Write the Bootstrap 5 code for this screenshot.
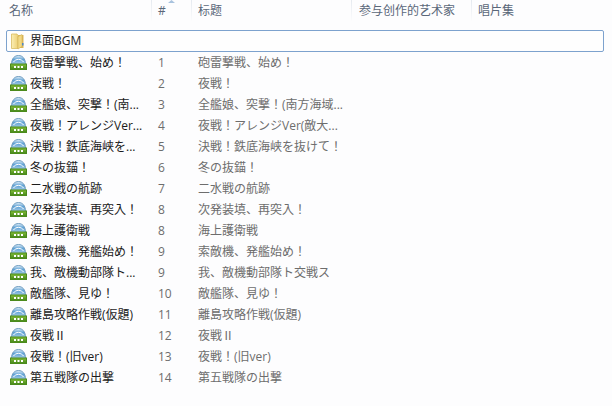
<!DOCTYPE html>
<html lang="ja">
<head>
<meta charset="utf-8">
<link href="https://cdn.jsdelivr.net/npm/bootstrap@5.3.0/dist/css/bootstrap.min.css" rel="stylesheet">
<style>
html,body{margin:0;background:#fdfdfe;overflow:hidden}
body{width:612px;height:406px;font:12px/16px "Open Sans","Noto Sans CJK JP",sans-serif;color:#1b1b1b}
.hdr{height:21px;color:#5a6779;font-family:"Open Sans","Noto Sans CJK SC",sans-serif}
.hcell{height:21px;padding-top:3px;border-right:1px solid #e8ecf1;border-image:linear-gradient(#e4e9ef,#fdfdfe) 1;white-space:nowrap;position:relative}
.c1{width:152px;padding-left:9px}
.c2{width:40px;padding-left:6px}
.c3{width:160px;padding-left:6px}
.c4{width:120px;padding-left:7px}
.c5{flex:1;padding-left:6px;border-right:0}
.sort{position:absolute;left:16px;top:0;width:7px;height:3px}
.folder{margin:9px 8px 0 6px;height:22px;border:1px solid #7da2ce;border-radius:2px;padding-left:4px;gap:6px;background:#fefefe}
.trk{height:21px;white-space:nowrap}
.ico{flex:none;display:block;width:17px;height:15px}
.fico{flex:none;display:block;width:13px;height:17px}
.nm{width:141px;margin-left:10px;display:flex;align-items:center;gap:3px}
.no{width:40px;padding-left:7px;color:#6d6d6d}
.ti{padding-left:7px;color:#6d6d6d}
.wide{font-family:"Noto Sans CJK JP",sans-serif}
</style>
</head>
<body>
<svg width="0" height="0" class="d-block position-absolute">
<defs>
<linearGradient id="dome" x1="0" y1="0" x2="0" y2="1"><stop offset="0" stop-color="#e4f0f9"/><stop offset=".45" stop-color="#5fa2d6"/><stop offset="1" stop-color="#a9cde8"/></linearGradient>
<linearGradient id="base" x1="0" y1="0" x2="0" y2="1"><stop offset="0" stop-color="#84bf38"/><stop offset="1" stop-color="#44851a"/></linearGradient>
<linearGradient id="fold" x1="0" y1="0" x2="1" y2="0"><stop offset="0" stop-color="#fbeeb4"/><stop offset="1" stop-color="#ecd076"/></linearGradient>
<symbol id="disc" viewBox="0 0 17 15">
<path d="M1.500 9.500C1.500 3.500 4.500 .5 8.500 .5s7 3 7 9z" fill="url(#dome)" stroke="#6f9cbf"/>
<path d="M3.500 7C5.500 3.500 11.500 3.500 13.500 7" fill="none" stroke="#fff"/>
<rect x=".5" y="9" width="16" height="5.500" fill="url(#base)" stroke="#4b8a1c"/>
<path d="M4 11h2v2H4zM7.500 11h2v2h-2zM11 11h2v2h-2z" fill="#fff"/>
</symbol>
</defs>
</svg>
<div class="hdr d-flex">
<div class="hcell c1">名称</div>
<div class="hcell c2">#<svg class="sort" viewBox="0 0 7 3"><path d="M0 3 3.500 0 7 3z" fill="#a9c3de"/></svg></div>
<div class="hcell c3">标题</div>
<div class="hcell c4">参与创作的艺术家</div>
<div class="hcell c5">唱片集</div>
</div>
<div class="folder d-flex align-items-center">
<svg class="fico" viewBox="0 0 13 17"><path d="M7 2h5.500v13H7z" fill="#dcb85a"/><path d="M.5 1h5.500l1 1.500v13H.5z" fill="url(#fold)" stroke="#d9bc62" stroke-width=".8"/><path d="M7 3.500 11 1.500v12L7 16z" fill="#f1d985" stroke="#cda94d" stroke-width=".5"/><path d="M11 10h1.500v2.500H11z" fill="#4d86c6"/></svg>
<span>界面BGM</span>
</div>
<div id="list"></div>
<script>
const rows=[["砲雷撃戦、始め！",1,"砲雷撃戦、始め！"],["夜戦！",2,"夜戦！"],["全艦娘、突撃！(南...",3,"全艦娘、突撃！(南方海域..."],["夜戦！アレンジVer...",4,"夜戦！アレンジVer(敵大..."],["決戦！鉄底海峡を...",5,"決戦！鉄底海峡を抜けて！"],["冬の抜錨！",6,"冬の抜錨！"],["二水戦の航跡",7,"二水戦の航跡"],["次発装填、再突入！",8,"次発装填、再突入！"],["海上護衛戦",8,"海上護衛戦"],["索敵機、発艦始め！",9,"索敵機、発艦始め！"],["我、敵機動部隊ト...",9,"我、敵機動部隊ト交戦ス"],["敵艦隊、見ゆ！",10,"敵艦隊、見ゆ！"],["離島攻略作戦(仮題)",11,"離島攻略作戦(仮題)"],["夜戦<span class=\"wide\">Ⅱ</span>",12,"夜戦<span class=\"wide\">Ⅱ</span>"],["夜戦！(旧ver)",13,"夜戦！(旧ver)"],["第五戦隊の出撃",14,"第五戦隊の出撃"]];
document.getElementById('list').innerHTML=rows.map(r=>`<div class="trk d-flex align-items-center"><div class="nm"><svg class="ico"><use href="#disc"/></svg><span>${r[0]}</span></div><div class="no">${r[1]}</div><div class="ti">${r[2]}</div></div>`).join('');
</script>
<script src="https://cdn.jsdelivr.net/npm/bootstrap@5.3.0/dist/js/bootstrap.bundle.min.js"></script>
</body>
</html>
